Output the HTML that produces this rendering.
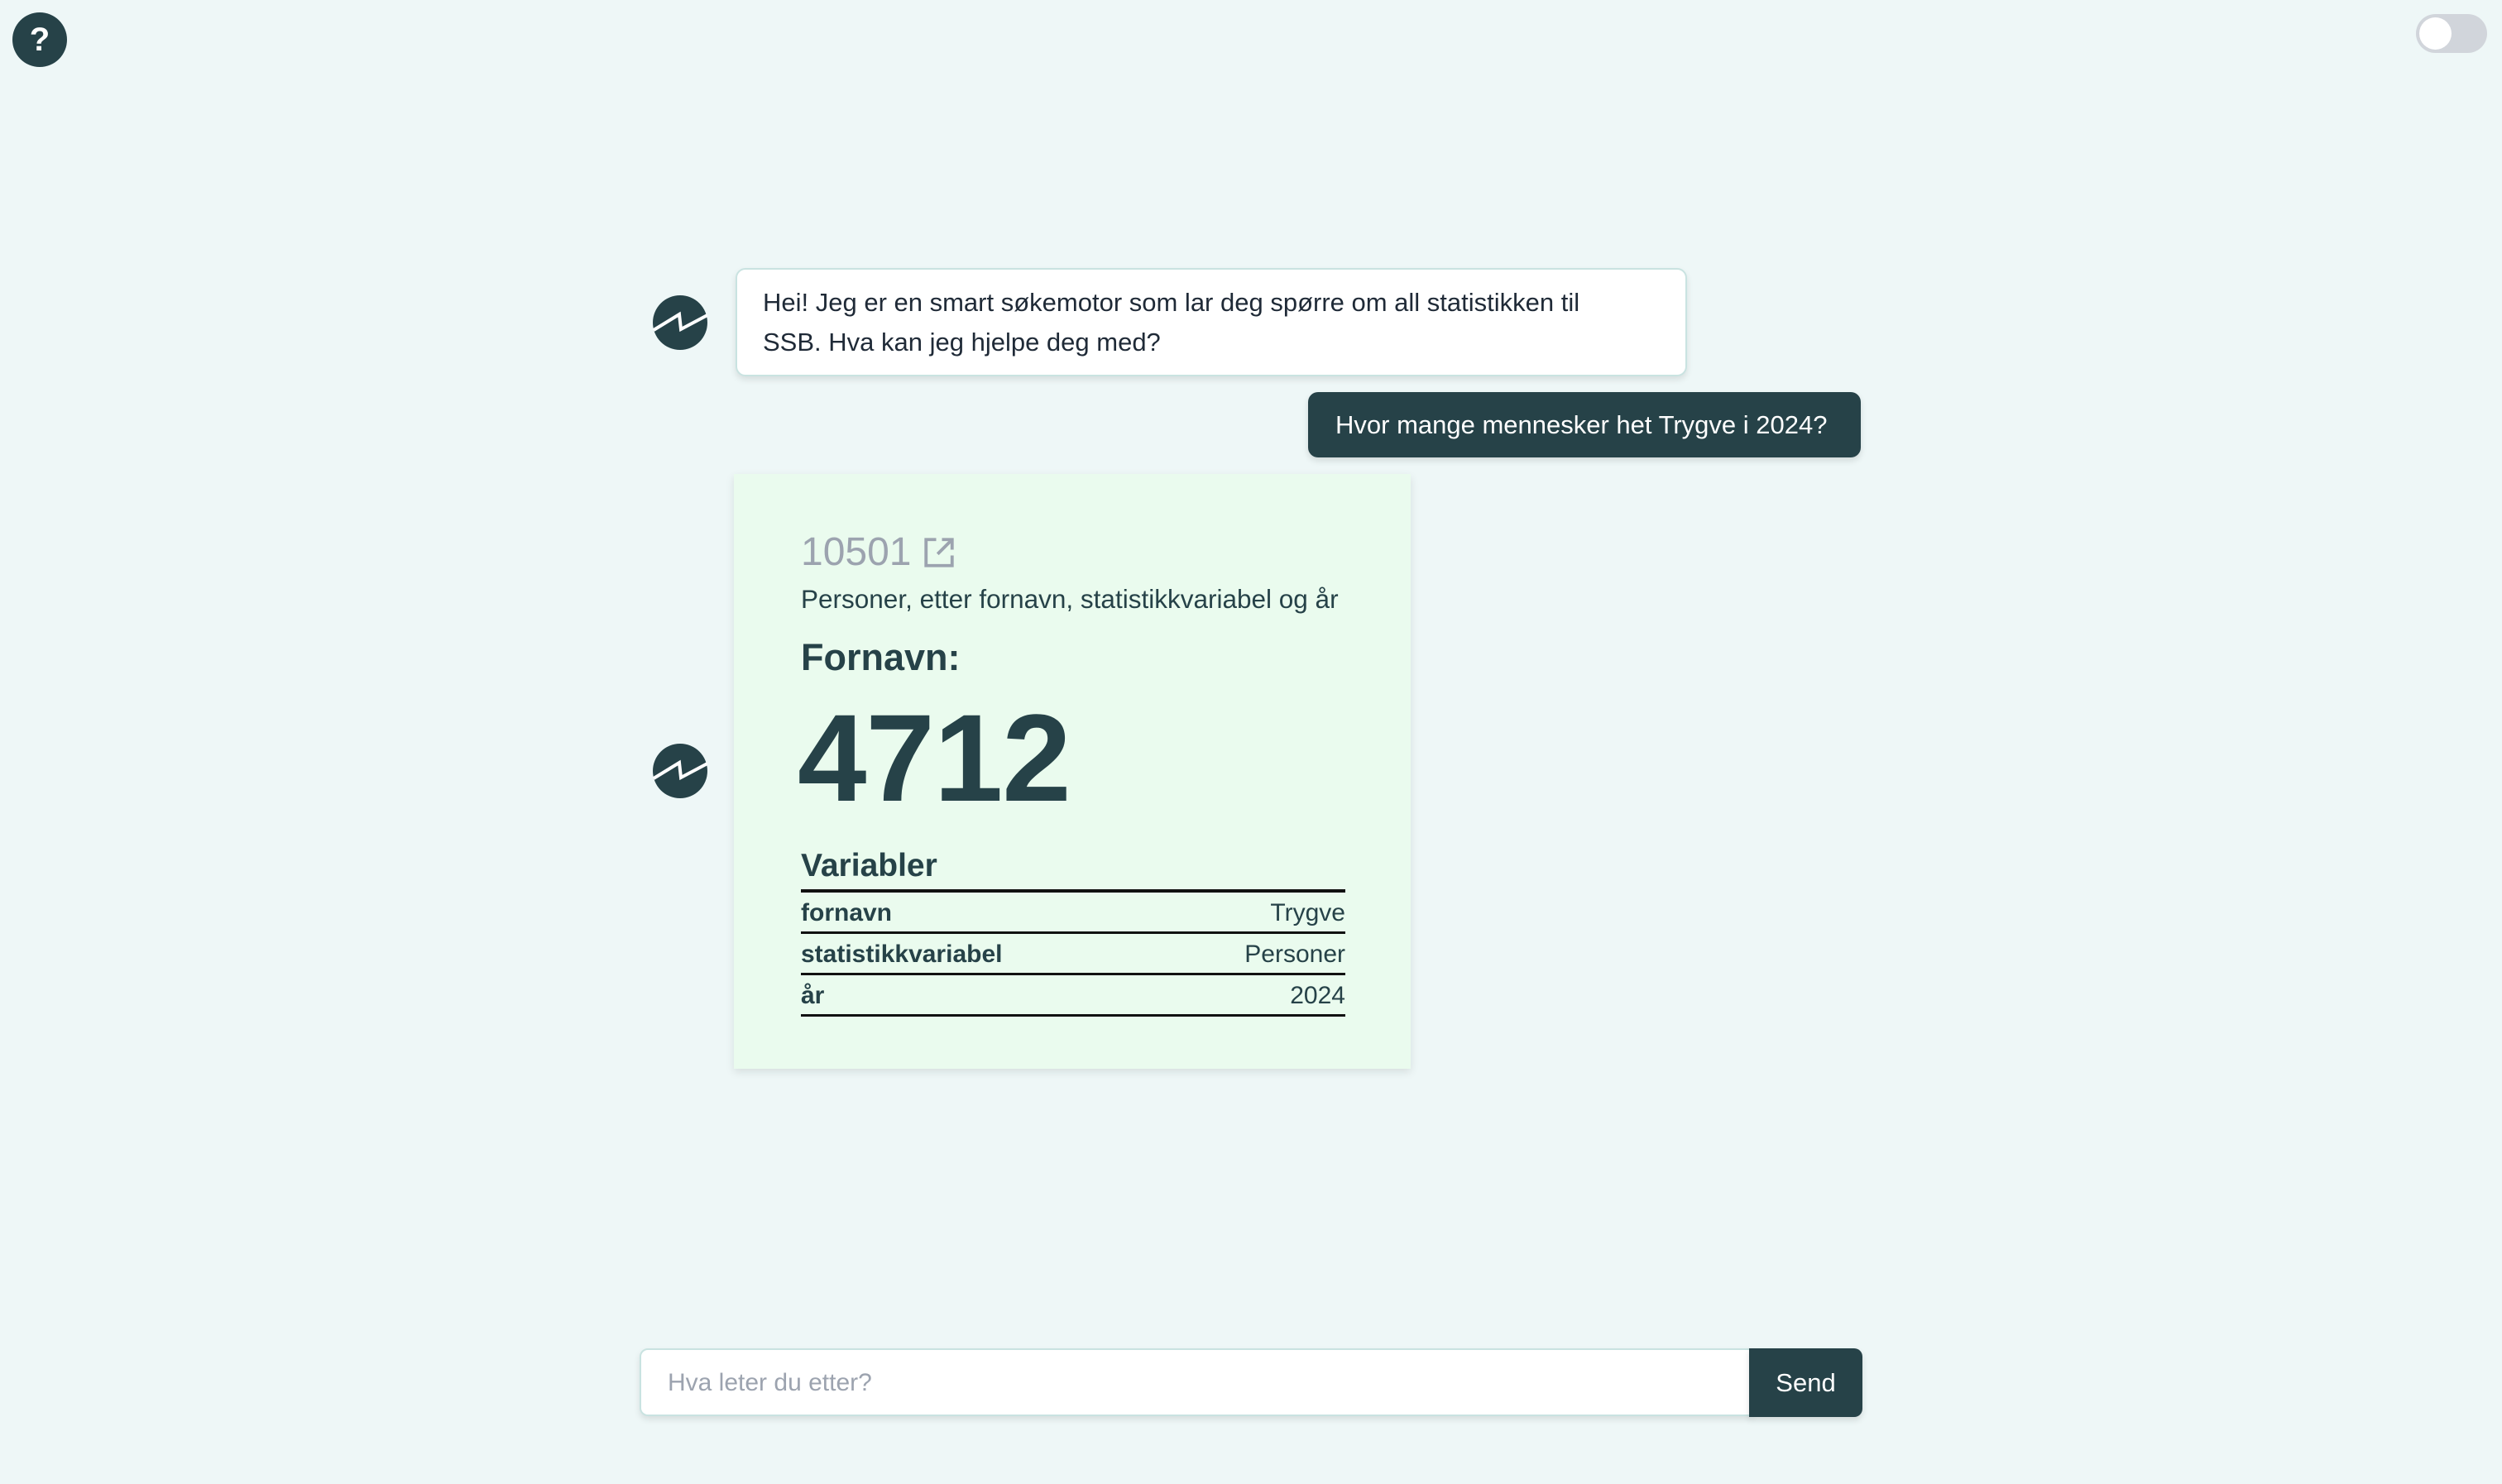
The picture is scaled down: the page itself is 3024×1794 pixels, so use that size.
<!DOCTYPE html>
<html><head><meta charset="utf-8"><style>
*{box-sizing:border-box;margin:0;padding:0}
body{width:3024px;height:1794px;background:#eef7f7;font-family:"Liberation Sans",sans-serif;position:relative;overflow:hidden;color:#1f2a37}
.abs{position:absolute}
.av{position:absolute;width:66px;height:66px}
.bubble{position:absolute;left:889px;top:324px;width:1150px;height:131px;background:#fff;border:2px solid #c9e3e1;border-radius:12px;box-shadow:0 4px 8px rgba(0,0,0,.1);padding:16px 90px 16px 31px;font-size:31px;line-height:48px;color:#1f2a37}
.user{position:absolute;left:1581px;top:474px;width:668px;height:79px;background:#264248;border-radius:12px;color:#fff;font-size:31px;line-height:79px;padding-left:33px;box-shadow:0 4px 8px rgba(0,0,0,.12)}
.card{position:absolute;left:887px;top:573px;width:818px;height:719px;background:#eafbee;box-shadow:0 4px 10px rgba(0,0,0,.1)}
.row{position:absolute;left:968px;width:658px;height:50px;border-bottom:3px solid #111;font-size:30px;color:#264248;display:flex;justify-content:space-between;align-items:center;padding-top:3px}
.row b{font-weight:bold}
</style></head><body>
<svg class="abs" style="left:15px;top:15px" width="66" height="66" viewBox="0 0 66 66"><circle cx="33" cy="33" r="33" fill="#264248"/><text x="33" y="46" text-anchor="middle" font-family="Liberation Sans" font-weight="bold" font-size="40" fill="#fff">?</text></svg>
<div class="abs" style="left:2920px;top:17px;width:86px;height:47px;border-radius:24px;background:#d1d5db"></div>
<div class="abs" style="left:2924px;top:21px;width:39px;height:39px;border-radius:50%;background:#fff"></div>

<svg class="av" style="left:789px;top:357px" viewBox="0 0 66 66"><circle cx="33" cy="33" r="33" fill="#264248"/><polyline points="1,42 32,23 34,41 66,24" fill="none" stroke="#fff" stroke-width="4"/></svg>
<div class="bubble">Hei! Jeg er en smart søkemotor som lar deg spørre om all statistikken til SSB. Hva kan jeg hjelpe deg med?</div>
<div class="user">Hvor mange mennesker het Trygve i 2024?</div>

<div class="card"></div>
<svg class="av" style="left:789px;top:899px" viewBox="0 0 66 66"><circle cx="33" cy="33" r="33" fill="#264248"/><polyline points="1,42 32,23 34,41 66,24" fill="none" stroke="#fff" stroke-width="4"/></svg>
<div class="abs" style="left:968px;top:638px;font-size:48px;color:#9ca3af;line-height:60px">10501</div>
<svg class="abs" style="left:1114px;top:647px" width="42" height="42" viewBox="0 0 24 24" fill="none" stroke="#9ca3af" stroke-width="2.2"><path d="M10 3H3v18h18v-7"/><path d="M14 3h7v7"/><path d="M21 3L11 13"/></svg>
<div class="abs" style="left:968px;top:704px;font-size:31.5px;color:#264248;line-height:40px">Personer, etter fornavn, statistikkvariabel og år</div>
<div class="abs" style="left:968px;top:767px;font-size:45px;font-weight:bold;color:#264248;line-height:56px">Fornavn:</div>
<div class="abs" style="left:964px;top:836px;font-size:150px;font-weight:bold;color:#264248;line-height:160px;letter-spacing:-1px">4712</div>
<div class="abs" style="left:968px;top:1023px;font-size:39px;font-weight:bold;color:#264248;line-height:48px">Variabler</div>
<div class="abs" style="left:968px;top:1075px;width:658px;height:4px;background:#111"></div>
<div class="row" style="top:1079px"><b>fornavn</b><span>Trygve</span></div>
<div class="row" style="top:1129px"><b>statistikkvariabel</b><span>Personer</span></div>
<div class="row" style="top:1179px"><b>år</b><span>2024</span></div>

<div class="abs" style="left:773px;top:1630px;width:1345px;height:82px;background:#fff;border:2px solid #c9e3e1;border-radius:10px 0 0 10px;box-shadow:0 4px 8px rgba(0,0,0,.1);font-size:30px;color:#9ca3af;line-height:80px;padding-left:32px">Hva leter du etter?</div>
<div class="abs" style="left:2114px;top:1630px;width:137px;height:83px;background:#264248;border-radius:0 10px 10px 0;color:#fff;font-size:31px;line-height:83px;text-align:center;box-shadow:0 4px 8px rgba(0,0,0,.12)">Send</div>
</body></html>
